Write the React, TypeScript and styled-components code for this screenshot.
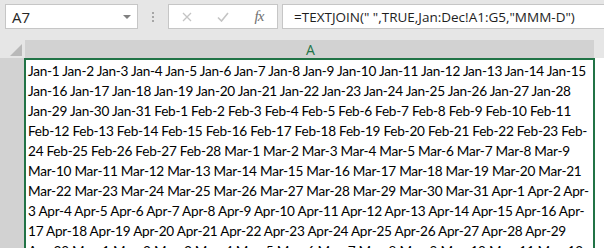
import * as React from 'react';
import styled, { createGlobalStyle } from 'styled-components';

const GlobalStyle = createGlobalStyle`
  html, body {
    margin: 0;
    padding: 0;
    overflow: hidden;
    background: #ffffff;
  }
  body {
    font-family: 'Open Sans', 'Liberation Sans', sans-serif;
  }
`;

const lines = [
  'Jan-1 Jan-2 Jan-3 Jan-4 Jan-5 Jan-6 Jan-7 Jan-8 Jan-9 Jan-10 Jan-11 Jan-12 Jan-13 Jan-14 Jan-15',
  'Jan-16 Jan-17 Jan-18 Jan-19 Jan-20 Jan-21 Jan-22 Jan-23 Jan-24 Jan-25 Jan-26 Jan-27 Jan-28',
  'Jan-29 Jan-30 Jan-31 Feb-1 Feb-2 Feb-3 Feb-4 Feb-5 Feb-6 Feb-7 Feb-8 Feb-9 Feb-10 Feb-11',
  'Feb-12 Feb-13 Feb-14 Feb-15 Feb-16 Feb-17 Feb-18 Feb-19 Feb-20 Feb-21 Feb-22 Feb-23 Feb-',
  '24 Feb-25 Feb-26 Feb-27 Feb-28 Mar-1 Mar-2 Mar-3 Mar-4 Mar-5 Mar-6 Mar-7 Mar-8 Mar-9',
  'Mar-10 Mar-11 Mar-12 Mar-13 Mar-14 Mar-15 Mar-16 Mar-17 Mar-18 Mar-19 Mar-20 Mar-21',
  'Mar-22 Mar-23 Mar-24 Mar-25 Mar-26 Mar-27 Mar-28 Mar-29 Mar-30 Mar-31 Apr-1 Apr-2 Apr-',
  '3 Apr-4 Apr-5 Apr-6 Apr-7 Apr-8 Apr-9 Apr-10 Apr-11 Apr-12 Apr-13 Apr-14 Apr-15 Apr-16 Apr-',
  '17 Apr-18 Apr-19 Apr-20 Apr-21 Apr-22 Apr-23 Apr-24 Apr-25 Apr-26 Apr-27 Apr-28 Apr-29',
  'Apr-30 May-1 May-2 May-3 May-4 May-5 May-6 May-7 May-8 May-9 May-10 May-11 May-12',
];

const Screen = styled.div`
  width: 604px;
  height: 248px;
  overflow: hidden;
  display: flex;
  flex-direction: column;
`;

const FormulaBar = styled.div`
  height: 40px;
  flex: none;
  background: #e6e6e6;
  display: flex;
  align-items: flex-start;
  padding: 4px 0 0 5px;
  box-sizing: border-box;
`;

const Field = styled.div<{ $w?: number; $gap?: number }>`
  height: 25px;
  box-sizing: border-box;
  background: #ffffff;
  border: 1px solid #c6c6c6;
  display: flex;
  align-items: center;
  margin-left: ${p => p.$gap ?? 0}px;
  ${p => (p.$w ? `width: ${p.$w}px; flex: none;` : 'flex: 1; border-right: none;')}
`;

const NameText = styled.span`
  font-size: 15px;
  color: #262626;
  padding-left: 6px;
  flex: 1;
`;

const Caret = styled.span`
  width: 0;
  height: 0;
  border-left: 4px solid transparent;
  border-right: 4px solid transparent;
  border-top: 4px solid #808080;
  margin-right: 6px;
`;

const Grip = styled.div`
  width: 30px;
  flex: none;
  height: 25px;
  display: flex;
  flex-direction: column;
  align-items: center;
  justify-content: center;
  gap: 2px;
  span {
    width: 2px;
    height: 2px;
    background: #a6a6a6;
  }
`;

const IconSlot = styled.div`
  width: 36px;
  display: flex;
  justify-content: center;
  align-items: center;
`;

const Fx = styled.span`
  font-family: 'Liberation Serif', serif;
  font-style: italic;
  font-size: 15px;
  color: #707070;
  letter-spacing: -1px;
`;

const Formula = styled.span`
  font-size: 13.5px;
  color: #1e1e1e;
  padding-left: 11px;
  white-space: pre;
`;

const HeaderRow = styled.div`
  height: 18px;
  flex: none;
  display: flex;
  background: #e6e6e6;
`;

const Corner = styled.div`
  width: 25px;
  flex: none;
  display: flex;
  align-items: flex-end;
  justify-content: flex-end;
  padding: 0 3px 2px 0;
  box-sizing: border-box;
`;

const ColHeader = styled.div`
  width: 569px;
  flex: none;
  background: #d2d2d2;
  color: #217346;
  font-size: 14px;
  display: flex;
  justify-content: center;
  align-items: center;
  padding-left: 2px;
  box-sizing: border-box;
`;

const SheetRow = styled.div`
  flex: 1;
  display: flex;
  min-height: 0;
`;

const RowHeader = styled.div`
  width: 24px;
  flex: none;
  background: #d2d2d2;
`;

const Cell = styled.div`
  width: 571px;
  flex: none;
  border: 2px solid #217346;
  border-bottom: none;
  box-sizing: border-box;
  overflow: hidden;
  padding: 1px 0 0 2px;
  background: #ffffff;
`;

const Line = styled.div`
  font-family: 'Lato', 'Liberation Sans', sans-serif;
  font-size: 13.6px;
  letter-spacing: -0.25px;
  line-height: 20px;
  color: #000000;
  white-space: pre;
`;

const Spare = styled.div`
  flex: 1;
  background: #ffffff;
`;

export default function App() {
  return (
    <Screen>
      <GlobalStyle />
      <FormulaBar>
        <Field $w={133}>
          <NameText>A7</NameText>
          <Caret />
        </Field>
        <Grip>
          <span />
          <span />
          <span />
        </Grip>
        <Field $w={110}>
          <IconSlot>
            <svg width="10" height="10" viewBox="0 0 10 10">
              <path d="M1 1 L9 9 M9 1 L1 9" stroke="#c4c4c4" strokeWidth="1.3" fill="none" />
            </svg>
          </IconSlot>
          <IconSlot>
            <svg width="12" height="10" viewBox="0 0 12 10">
              <path d="M1 5.5 L4.5 9 L11 1" stroke="#c4c4c4" strokeWidth="1.6" fill="none" />
            </svg>
          </IconSlot>
          <IconSlot>
            <Fx>fx</Fx>
          </IconSlot>
        </Field>
        <Field $gap={4}>
          <Formula>=TEXTJOIN(" ",TRUE,Jan:Dec!A1:G5,"MMM-D")</Formula>
        </Field>
      </FormulaBar>
      <HeaderRow>
        <Corner>
          <svg width="12" height="12" viewBox="0 0 12 12">
            <path d="M12 0 L12 12 L0 12 Z" fill="#b9b9b9" />
          </svg>
        </Corner>
        <ColHeader>A</ColHeader>
      </HeaderRow>
      <SheetRow>
        <RowHeader />
        <Cell>
          {lines.map((l, i) => (
            <Line key={i}>{l}</Line>
          ))}
        </Cell>
        <Spare />
      </SheetRow>
    </Screen>
  );
}
